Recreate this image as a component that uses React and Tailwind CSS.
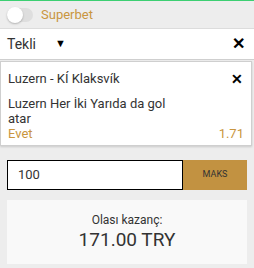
import React from "react";

function App() {
    return (
        <div className="w-[254px] h-[268px] bg-[#ededed] font-['Roboto',sans-serif] text-[#222] overflow-hidden">
            {/* top accent line */}
            <div className="h-px bg-[#3ccf72]" />

            {/* Superbet toggle */}
            <div className="flex items-center h-[28px] px-[7px] gap-[8px] border-b border-[#dcdcdc]">
                <div className="relative w-[26px] h-[14px] rounded-full bg-[#dedede]">
                    <div className="absolute left-0 top-[-1px] w-[16px] h-[16px] rounded-full bg-white shadow-[0_1px_2px_rgba(0,0,0,0.25)]" />
                </div>
                <span className="text-[13px] text-[#c9963f]">Superbet</span>
            </div>

            {/* Tekli row */}
            <div className="flex items-center h-[31px] px-[7px] bg-white border-b border-[#cfcfcf] text-[14px] text-[#333]">
                <span className="w-[48px]">Tekli</span>
                <span className="text-[11px] text-black">▼</span>
                <span className="ml-auto font-bold text-[16px] leading-none mr-[2px] text-black">✕</span>
            </div>

            {/* Bet card */}
            <div className="mt-[1px] mr-[2px] bg-white border border-[#cfcfcf] shadow-[0_1px_2px_rgba(0,0,0,0.15)] px-[7px] pt-[7px] pb-[4px] text-[13px] text-[#333]">
                <div className="flex items-center">
                    <span>Luzern - KÍ Klaksvík</span>
                    <span className="ml-auto font-bold text-[14px] leading-none mr-[1px] text-black">✕</span>
                </div>
                <div className="mt-[7px] leading-[15px] w-[160px]">Luzern Her İki Yarıda da gol atar</div>
                <div className="flex items-center text-[#c9963f] leading-[15px]">
                    <span>Evet</span>
                    <span className="ml-auto">1.71</span>
                </div>
            </div>

            {/* Stake input */}
            <div className="flex mx-[7px] mt-[14px] h-[30px]">
                <div className="flex items-center flex-1 bg-white border border-black px-[10px] text-[13px] text-[#333]">100</div>
                <button className="w-[64px] bg-[#c29241] text-[9px] text-[#333]">MAKS</button>
            </div>

            {/* Possible win */}
            <div className="mx-[7px] mt-[10px] h-[64px] bg-[#f9f9f9] flex flex-col items-center justify-center text-[#333]">
                <span className="text-[12px] leading-[16px]">Olası kazanç:</span>
                <span className="text-[19px] leading-[24px]">171.00 TRY</span>
            </div>
        </div>
    );
}

export default App;
